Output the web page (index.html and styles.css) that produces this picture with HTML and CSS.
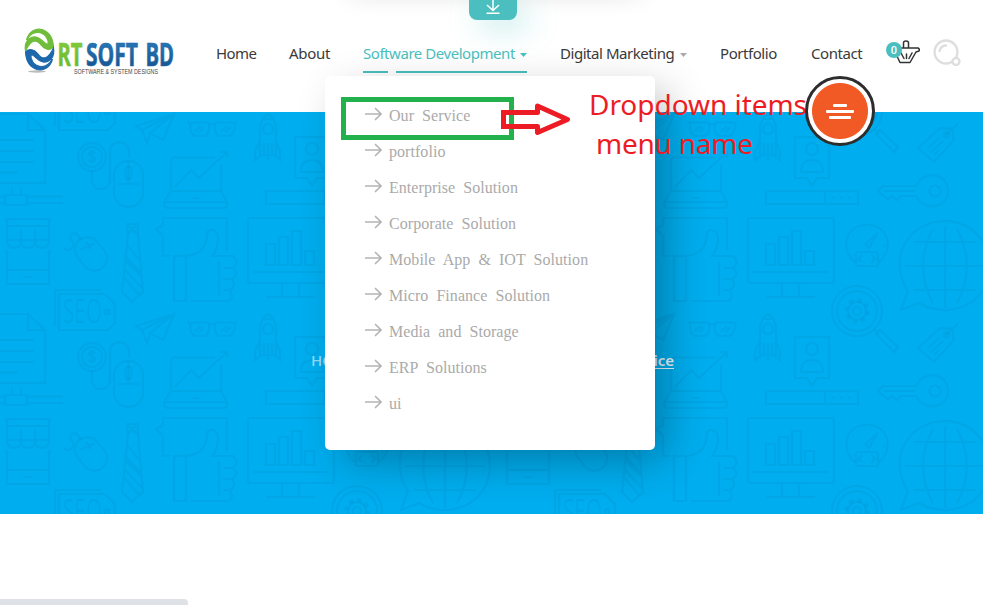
FILE: index.html
```html
<!DOCTYPE html>
<html lang="en">
<head>
<meta charset="utf-8">
<title>RT Soft BD</title>
<link rel="stylesheet" href="styles.css">
</head>
<body>
<header class="header">
  <a class="logo">
    <svg width="156" height="52" viewBox="20 26 156 52">
      <defs>
        <linearGradient id="green" x1="0" y1="0" x2="0" y2="1"><stop offset="0" stop-color="#8fce3c"/><stop offset="1" stop-color="#5db531"/></linearGradient>
        <linearGradient id="blue" x1="0" y1="0" x2="0" y2="1"><stop offset="0" stop-color="#2d86c4"/><stop offset="1" stop-color="#134a86"/></linearGradient>
        <path id="swirl" d="M26.500 40C29 31 36 28 42 29.500C50 32 53 39 53.500 47C50 51.500 44 49 41 45C37 39 31 39 25.500 51C24 42 29 36.500 36 37C42 38 44 44 48 44.500C49 39 45 33 38 32.500C32 32 29 36 26.500 40Z"/>
      </defs>
      <ellipse cx="37" cy="71.500" rx="9" ry="1.200" fill="#bbb"/>
      <use href="#swirl" fill="#6fbd3a" stroke="#6fbd3a" stroke-width="1.200"/>
      <use href="#swirl" fill="#1d68ac" stroke="#1d68ac" stroke-width="1.200" transform="rotate(180 39.500 49.500)"/>
      <g class="logo-name" font-size="33">
        <text x="57.500" y="65.500" textLength="25" lengthAdjust="spacingAndGlyphs" fill="url(#green)" stroke="#7cc637">RT</text>
        <text x="86" y="65.500" textLength="52" lengthAdjust="spacingAndGlyphs" fill="url(#blue)" stroke="#2169a6">SOFT</text>
        <text x="145.500" y="65.500" textLength="28.500" lengthAdjust="spacingAndGlyphs" fill="url(#blue)" stroke="#2169a6">BD</text>
      </g>
      <text class="logo-tag" x="74" y="74" font-size="7" textLength="84" lengthAdjust="spacingAndGlyphs">SOFTWARE &amp; SYSTEM DESIGNS</text>
    </svg>
  </a>
  <nav class="nav">
    <a class="nav-item home">Home</a>
    <a class="nav-item about">About</a>
    <a class="nav-item software active">Software Development<i class="caret"></i></a>
    <a class="nav-item digital">Digital Marketing<i class="caret"></i></a>
    <a class="nav-item portfolio">Portfolio</a>
    <a class="nav-item contact">Contact</a>
  </nav>
  <div class="tools">
    <svg width="34" height="28" viewBox="886 38 34 28" fill="none" stroke="#333" stroke-width="1.5" stroke-linejoin="round" stroke-linecap="round">
      <path d="M900 48H903.500V43Q903.500 41 906 41Q908.500 41 908.500 43V48H918Q920 49 919 51L916 52L910 62.500H900L896 54M903.500 48H908.500M901 53L904 58.500M906.500 54V58.500M912 53L909 58.500"/>
      <circle cx="894" cy="50" r="8" fill="#4bbfbf" stroke="none"/>
      <text class="badge" x="894" y="53.500" text-anchor="middle">0</text>
    </svg>
    <svg width="28" height="28" viewBox="933 38 28 28" fill="none" stroke="#dedede" stroke-width="2.300">
      <circle cx="946" cy="52" r="11.500"/><circle cx="956" cy="61.500" r="3.500" fill="#fff"/><path d="M939.500 51Q941 45.500 946 45.500" stroke-linecap="round"/>
    </svg>
  </div>
  <div class="download">
    <svg width="16" height="16" viewBox="0 0 16 16" fill="none" stroke="#fff" stroke-width="1.500"><path d="M8 0V10.500M2 5L8 10.500L14 5M1.500 13.300H14.500"/></svg>
  </div>
</header>

<main class="hero">
  <svg class="doodles" width="983" height="402" viewBox="0 0 983 402">
    <defs>
      <g id="tile">
        <path d="M-8 2H28L45 18V71H-8ZM28 2V18H45M-2 28H34M-2 39H34M-2 50H34M-2 60.500H18"/>
        <path d="M-30 84.500H5M-30 91H5M28 84.500H63M28 91H63M5 83H27V93H5ZM12 76V83M21 76V83"/>
        <path d="M101 178H55V214M59 182H105L115 192V211L108 218H59Z"/><circle cx="107" cy="200" r="2.300"/>
        <text class="seo" x="63" y="211" font-size="32" textLength="39" lengthAdjust="spacingAndGlyphs">SEO</text>
        <path d="M136 14L174 2L163 28L150 21L147 31L142 18ZM174 2L142 18M174 2L150 21"/>
        <path d="M187 10.500H208Q210 12 209 18Q208 24 204 24H195Q190 23 190 11M237 10.500H216Q214 12 215 18Q216 24 220 24H229Q235 23 235 11M209 12H215M195 19L201 14M199 20L204 15M221 19L227 14M225 20L231 15"/>
        <path d="M260 43V16Q261 6 268 2Q275 6 276 16V43M260 29L255 39V48L262 43H274L280 48V39L276 29M264 31V43M268 31V48M272 31V43M263 7H273"/><circle cx="268" cy="17" r="5"/>
        <path d="M295 25H329V66H317L312 74L307 66H295ZM301 60Q301 48 312 48Q323 48 323 60Z"/><circle cx="312" cy="37" r="6"/>
        <circle cx="92" cy="45" r="14"/><circle cx="92" cy="45" r="10"/><path d="M96 41Q89 38 89 43Q96 45 95 48Q91 51 88 48M92 38V52M92 59V68C92 80 110 80 110 68V40C110 27 129 27 129 40V45"/>
        <rect x="114" y="49" width="29" height="46" rx="14"/><rect x="125.500" y="55" width="6" height="12" rx="3"/><path d="M128.500 49V72M118 72H139"/>
        <path d="M215 45.500H175Q171 46 171 50V79L164 90V93Q165 96 168 96H224Q227 96 227 93V90L221 79V52M171 79H221M164 90H227M192 86H199M175 75L191 58L199 66L227 40M220 40H227V46"/>
        <path d="M266 79H358V92H266ZM325 79V92M332 85.500h2M340 85.500h2M348 85.500h2"/>
        <path d="M416 74H383L378 79L388 88L392 84L397 88L401 84H416C424 100 448 97 448 79C448 61 424 57 416 74ZM384 79H415"/><circle cx="435" cy="79" r="5.500"/>
        <path d="M7 128V107H49V128M7 114H49M7 128Q7 136 14 136Q21 136 21 128Q21 136 28 136Q35 136 35 128Q35 136 42 136Q49 136 49 128H7M21 118V128M35 118V128M7 138V172H49V138M7 158H49M24 165H32"/>
        <rect x="-12.500" y="-18" width="25" height="36" rx="12.500" transform="translate(91 142) rotate(-40)"/><path d="M80 138L95 131M86 130L91 137M81 128Q76 118 70 123Q70 127 73 130Q75 136 69 138Q66 138 64 136"/>
        <path d="M127 112H138V120L143 180L132 190L122 180L128 122ZM127 112L137 122M137 112L128 122M127 133L141 150M126 145L142 162M125 148L142 165M124 157L142 176M123 164L139 183"/>
        <path d="M170 144H163V124L156 117L163 113V106H227V139M174 144H186V189H174ZM186 144Q207 142 207 121C209 115 219 118 218 128Q217 138 212 144H233Q240 150 233 156H224M233 156Q240 162 232 167H223M232 167Q237 174 230 178H223M230 178Q235 189 226 189H191M219 149V184"/>
        <path d="M250 106H332Q334 106 334 108V169Q334 171 332 171H250Q248 171 248 169V108Q248 106 250 106ZM253 160H328M282 171V184M299 171V184M266 185H315M266 132H275V153H266ZM279 125H288V153H279ZM292 119H301V153H292ZM305 139H314V153H305Z"/>
        <path d="M355 150C341 140 343 113 367 113C391 113 393 140 379 150M365 132L377 122L369 136ZM362 143L359 147L362 150M372 143L375 147L372 150"/><rect x="356" y="140" width="22" height="14" rx="2"/><circle cx="367" cy="134" r="17" stroke-dasharray="1 6"/>
        <circle cx="357" cy="199" r="25"/><circle cx="357" cy="199" r="20"/><circle cx="357" cy="199" r="11" stroke-width="4" stroke-dasharray="4.300 4.340"/><circle cx="357" cy="199" r="9"/><circle cx="357" cy="199" r="4"/>
        <path d="M374 217L379 222M376 222L380 218L398 235L394 240Z"/>
        <path d="M418 36L440 16L452 17L454 28L434 50ZM458 12L445 23M428 36L439 26M431 40L443 29M434 43L439 38"/><circle cx="446" cy="23" r="2.500"/>
        <path d="M408 179C386 145 410 109 445 109C470 109 490 129 490 154C490 191 450 209 419 191L401 198Z M445 114V196M405 154H485M414 130H476M414 178H476M433 117C420 140 420 168 433 191M457 117C470 140 470 168 457 191"/>
      </g>
    </defs>
    <g fill="none" stroke="#00568f" stroke-opacity=".09" stroke-width="2.200">
      <use href="#tile" y="-200"/><use href="#tile"/><use href="#tile" y="200"/>
      <use href="#tile" x="500" y="-200"/><use href="#tile" x="500"/><use href="#tile" x="500" y="200"/>
    </g>
  </svg>
  <div class="crumbs"><span>HOME</span><a>Our Service</a></div>
</main>

<ul class="menu">
  <li><svg class="arrow" viewBox="0 0 17 14"><path d="M0 7H16M10 1L16 7L10 13"/></svg>Our Service</li>
  <li><svg class="arrow" viewBox="0 0 17 14"><path d="M0 7H16M10 1L16 7L10 13"/></svg>portfolio</li>
  <li><svg class="arrow" viewBox="0 0 17 14"><path d="M0 7H16M10 1L16 7L10 13"/></svg>Enterprise Solution</li>
  <li><svg class="arrow" viewBox="0 0 17 14"><path d="M0 7H16M10 1L16 7L10 13"/></svg>Corporate Solution</li>
  <li><svg class="arrow" viewBox="0 0 17 14"><path d="M0 7H16M10 1L16 7L10 13"/></svg>Mobile App &amp; IOT Solution</li>
  <li><svg class="arrow" viewBox="0 0 17 14"><path d="M0 7H16M10 1L16 7L10 13"/></svg>Micro Finance Solution</li>
  <li><svg class="arrow" viewBox="0 0 17 14"><path d="M0 7H16M10 1L16 7L10 13"/></svg>Media and Storage</li>
  <li><svg class="arrow" viewBox="0 0 17 14"><path d="M0 7H16M10 1L16 7L10 13"/></svg>ERP Solutions</li>
  <li><svg class="arrow" viewBox="0 0 17 14"><path d="M0 7H16M10 1L16 7L10 13"/></svg>ui</li>
</ul>

<svg class="callout" width="983" height="605" viewBox="0 0 983 605">
  <rect x="343.500" y="99.500" width="168" height="38" fill="none" stroke="#22b14c" stroke-width="5"/>
  <path d="M503.500 112.500H537.500V106L567.500 119.500L537.500 132.500V126.500H503.500Z" fill="none" stroke="#ed1c24" stroke-width="5" stroke-linejoin="round"/>
  <path d="M501 110H506V115H501ZM501 124H506V129H501Z" fill="#ed1c24"/>
  <g class="note">
    <text x="589" y="115" textLength="218">Dropdown items</text>
    <text x="596" y="154" textLength="157">menu name</text>
  </g>
</svg>

<button class="fab"><i></i><i></i><i></i></button>
<div class="status"></div>
</body>
</html>
```

FILE: styles.css
```css
* { box-sizing: border-box; }
body {
  margin: 0;
  height: 605px;
  overflow: hidden;
  position: relative;
  background: #fff;
  font-family: "Noto Sans", "Open Sans", sans-serif;
}
svg { display: block; }

.header { position: relative; display: flex; height: 112px; padding: 26px 20px 0 20px; background: #fff; }
.header::before {
  content: "";
  position: absolute;
  left: 350px;
  top: -20px;
  width: 290px;
  height: 10px;
  box-shadow: 0 0 24px rgba(0, 0, 0, .25);
}
.logo { width: 196px; flex: none; }
.logo-name { font-family: "Open Sans", sans-serif; font-weight: 700; stroke-width: .7px; }
.logo-tag { font-family: "Liberation Sans", sans-serif; fill: #444; }

.nav { display: flex; flex: none; height: 47px; font-size: 15px; letter-spacing: -.45px; color: #3a3a3a; }
.nav-item { display: flex; position: relative; white-space: nowrap; line-height: 20px; padding-top: 17px; }
.home { width: 73px; letter-spacing: -.6px; }
.about { width: 74px; letter-spacing: -.3px; }
.software { width: 164px; margin-right: 33px; }
.digital { width: 127px; margin-right: 33px; }
.portfolio { width: 91px; }
.contact { width: 75px; }
.active { color: #4bbfbf; }
.active::after {
  content: "";
  position: absolute;
  left: 0;
  top: 45px;
  width: 164px;
  height: 2px;
  background: linear-gradient(90deg, #4bbfbf 25px, transparent 25px 33px, #4bbfbf 33px);
}
.caret { margin: 10px 0 0 auto; width: 7px; height: 4px; background: #aaa; clip-path: polygon(0 0, 100% 0, 50% 100%); }
.active .caret { background: #4bbfbf; }

.tools { display: flex; flex: none; gap: 13px; padding-top: 12px; }
.badge { font: 500 11px Roboto, sans-serif; letter-spacing: 0; fill: #fff; stroke: none; }

.download {
  position: absolute;
  left: 469px;
  top: 0;
  width: 48px;
  height: 20px;
  border-radius: 0 0 8px 8px;
  background: #4bbfbf;
  padding-left: 16px;
  box-shadow: 10px 8px 30px rgba(75, 191, 191, .35);
}

.hero { position: relative; height: 402px; background: #00aeef; overflow: hidden; }
.seo { font-family: "Open Sans", sans-serif; font-weight: 400; fill: #00568f; fill-opacity: .09; stroke: none; }
.crumbs {
  position: absolute;
  left: 311px;
  top: 237px;
  width: 363px;
  display: flex;
  justify-content: space-between;
  font-size: 15px;
  font-weight: 500;
  line-height: 22px;
  color: rgba(255, 255, 255, .6);
}
.crumbs a { color: #e8f7fd; font-weight: 600; text-decoration: underline; text-underline-offset: 2px; }

.menu {
  position: absolute;
  left: 325px;
  top: 76px;
  width: 330px;
  height: 374px;
  margin: 0;
  padding: 22px 40px;
  list-style: none;
  border-radius: 5px;
  background: #fff;
  box-shadow: 14px 14px 44px -4px rgba(0, 0, 0, .3);
  font: 16px/36px "Liberation Serif", serif;
  letter-spacing: .05px;
  word-spacing: 4px;
  color: #aaa;
}
.menu li { display: flex; height: 36px; white-space: nowrap; }
.arrow { width: 17px; height: 14px; margin: 9px 7px 0 0; fill: none; stroke: #b5b5b5; stroke-width: 1.6; }

.callout { position: absolute; left: 0; top: 0; }
.note { font: 28px "Noto Sans", sans-serif; fill: #ed1c24; }

.fab {
  position: absolute;
  left: 805px;
  top: 76px;
  width: 70px;
  height: 70px;
  border: 3px solid #2d2d2d;
  border-radius: 50%;
  background: radial-gradient(circle, #f15a24 27.500px, #fff 28.500px);
  padding: 0;
  display: flex;
  flex-direction: column;
  align-items: center;
  justify-content: center;
  gap: 3px;
}
.fab i { width: 28px; height: 3px; background: #fff; border-radius: 1px; }
.fab i:first-child { width: 14px; }
.fab i:last-child { width: 22px; }
.status { position: absolute; left: 0; bottom: 0; width: 188px; height: 6px; background: #dee1e6; border-radius: 0 4px 0 0; }
```
